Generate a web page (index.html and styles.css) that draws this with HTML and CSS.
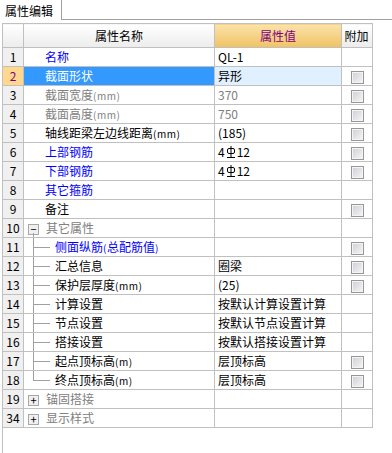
FILE: index.html
```html
<!DOCTYPE html>
<html lang="zh-CN">
<head>
    <meta charset="UTF-8">
    <title>属性编辑</title>
    <link rel="stylesheet" href="styles.css">
</head>
<body>
    <div class="tabbar">
        <div class="tab">属性编辑</div>
        <div class="tab-rest"></div>
    </div>

    <div class="panel">
        <table class="grid">
            <colgroup>
                <col class="c-num">
                <col class="c-name">
                <col class="c-val">
                <col class="c-add">
            </colgroup>
            <thead>
                <tr>
                    <th class="h-num"></th>
                    <th class="h-name">属性名称</th>
                    <th class="h-val">属性值</th>
                    <th class="h-add">附加</th>
                </tr>
            </thead>
            <tbody>
                <tr>
                    <td class="num">1</td>
                    <td class="name blue">名称</td>
                    <td class="val">QL-1</td>
                    <td class="add"></td>
                </tr>
                <tr class="selected">
                    <td class="num">2</td>
                    <td class="name">截面形状</td>
                    <td class="val">异形</td>
                    <td class="add"><span class="cb"></span></td>
                </tr>
                <tr>
                    <td class="num">3</td>
                    <td class="name gray">截面宽度<small>(mm)</small></td>
                    <td class="val gray">370</td>
                    <td class="add"><span class="cb"></span></td>
                </tr>
                <tr>
                    <td class="num">4</td>
                    <td class="name gray">截面高度<small>(mm)</small></td>
                    <td class="val gray">750</td>
                    <td class="add"><span class="cb"></span></td>
                </tr>
                <tr>
                    <td class="num">5</td>
                    <td class="name">轴线距梁左边线距离<small>(mm)</small></td>
                    <td class="val">(185)</td>
                    <td class="add"><span class="cb"></span></td>
                </tr>
                <tr>
                    <td class="num">6</td>
                    <td class="name blue">上部钢筋</td>
                    <td class="val">4<svg class="bar" width="10" height="12" viewBox="0 0 10 12"><rect x="1.5" y="2.5" width="7" height="5" rx="1.5" fill="none" stroke="#000"/><path d="M5 0v11M1 11.5h8" stroke="#000"/></svg>12</td>
                    <td class="add"><span class="cb"></span></td>
                </tr>
                <tr>
                    <td class="num">7</td>
                    <td class="name blue">下部钢筋</td>
                    <td class="val">4<svg class="bar" width="10" height="12" viewBox="0 0 10 12"><rect x="1.5" y="2.5" width="7" height="5" rx="1.5" fill="none" stroke="#000"/><path d="M5 0v11M1 11.5h8" stroke="#000"/></svg>12</td>
                    <td class="add"><span class="cb"></span></td>
                </tr>
                <tr>
                    <td class="num">8</td>
                    <td class="name blue">其它箍筋</td>
                    <td class="val"></td>
                    <td class="add"></td>
                </tr>
                <tr>
                    <td class="num">9</td>
                    <td class="name">备注</td>
                    <td class="val"></td>
                    <td class="add"><span class="cb"></span></td>
                </tr>
                <tr>
                    <td class="num">10</td>
                    <td class="name group open gray"><span class="toggle">−</span>其它属性</td>
                    <td class="val"></td>
                    <td class="add"></td>
                </tr>
                <tr>
                    <td class="num">11</td>
                    <td class="name child blue">侧面纵筋<small>(</small>总配筋值<small>)</small></td>
                    <td class="val"></td>
                    <td class="add"><span class="cb"></span></td>
                </tr>
                <tr>
                    <td class="num">12</td>
                    <td class="name child">汇总信息</td>
                    <td class="val">圈梁</td>
                    <td class="add"><span class="cb"></span></td>
                </tr>
                <tr>
                    <td class="num">13</td>
                    <td class="name child">保护层厚度<small>(mm)</small></td>
                    <td class="val">(25)</td>
                    <td class="add"><span class="cb"></span></td>
                </tr>
                <tr>
                    <td class="num">14</td>
                    <td class="name child">计算设置</td>
                    <td class="val">按默认计算设置计算</td>
                    <td class="add"></td>
                </tr>
                <tr>
                    <td class="num">15</td>
                    <td class="name child">节点设置</td>
                    <td class="val">按默认节点设置计算</td>
                    <td class="add"></td>
                </tr>
                <tr>
                    <td class="num">16</td>
                    <td class="name child">搭接设置</td>
                    <td class="val">按默认搭接设置计算</td>
                    <td class="add"></td>
                </tr>
                <tr>
                    <td class="num">17</td>
                    <td class="name child">起点顶标高<small>(m)</small></td>
                    <td class="val">层顶标高</td>
                    <td class="add"><span class="cb"></span></td>
                </tr>
                <tr>
                    <td class="num">18</td>
                    <td class="name child last">终点顶标高<small>(m)</small></td>
                    <td class="val">层顶标高</td>
                    <td class="add"><span class="cb"></span></td>
                </tr>
                <tr>
                    <td class="num">19</td>
                    <td class="name group gray"><span class="toggle">+</span>锚固搭接</td>
                    <td class="val"></td>
                    <td class="add"></td>
                </tr>
                <tr>
                    <td class="num">34</td>
                    <td class="name group gray"><span class="toggle">+</span>显示样式</td>
                    <td class="val"></td>
                    <td class="add"></td>
                </tr>
            </tbody>
        </table>
    </div>
</body>
</html>
```

FILE: styles.css
```css
* {
    margin: 0;
    padding: 0;
    box-sizing: border-box;
}

body {
    font-family: "Noto Sans CJK SC", "Liberation Sans", sans-serif;
    font-size: 12px;
    color: #000;
    background: #fff;
    overflow: hidden;
}

/* 标签页 */
.tabbar {
    display: flex;
    height: 20px;
}

.tab {
    width: 62px;
    height: 20px;
    padding: 1px 0 0 5px;
    line-height: 19px;
    border-right: 1px solid #a0a0a0;
}

.tab-rest {
    flex: 1;
    border-bottom: 1px solid #a0a0a0;
}

.panel {
    margin: 3px 0 0 2px;
    height: calc(100vh - 23px);
    border-left: 1px solid #c0c0c0;
}

/* 属性表格 */
.grid {
    margin-left: -1px;
    width: 370px;
    table-layout: fixed;
    border-collapse: collapse;
}

.c-num { width: 21px; }
.c-name { width: 191px; }
.c-val { width: 127px; }
.c-add { width: 31px; }

.grid th,
.grid td {
    border: 1px solid #c0c0c0;
    white-space: nowrap;
    overflow: hidden;
    font-weight: normal;
    line-height: 16px;
}

.grid th {
    height: 24px;
    text-align: center;
    background: linear-gradient(#ffffff, #ececec);
}

.grid th.h-val {
    color: #800080;
    background: linear-gradient(#fbe3ab, #f0c263);
}

.grid th.h-add {
    padding-right: 1px;
}

.grid td {
    height: 19px;
    padding: 0;
}

.num {
    text-align: center;
    background: #f0f0f0;
}

.name {
    padding-left: 21px !important;
    position: relative;
}

.val {
    padding-left: 3px !important;
}

.add {
    text-align: center;
}

small {
    font-size: 10px;
    letter-spacing: 0.5px;
}

.blue { color: #0000ff; }
.gray { color: #808080; }

.selected .num {
    color: #800080;
    background: #ffd88e;
}

.selected .name {
    color: #fff;
    background: #3399ff;
}

.selected .val {
    background: #e0f0ff;
}

.bar {
    vertical-align: -1px;
    margin: 0 1px;
}

/* 复选框 */
.cb {
    display: inline-block;
    width: 13px;
    height: 13px;
    vertical-align: middle;
    border: 1px solid #979797;
    box-shadow: inset 0 0 0 1px #f4f4f4;
    background: linear-gradient(135deg, #cfcfd4, #f6f6f8);
}

/* 树形分组 */
.group {
    padding-left: 4px !important;
}

.toggle {
    display: inline-block;
    width: 11px;
    height: 11px;
    margin-right: 7px;
    border: 1px solid #a8a8a8;
    background: #f0f0f0;
    color: #000;
    font-size: 11px;
    line-height: 8px;
    text-align: center;
    vertical-align: -1px;
}

.group.open::after {
    content: "";
    position: absolute;
    left: 9px;
    top: 14px;
    bottom: 0;
    border-left: 1px solid #a0a0a0;
}

.child {
    padding-left: 31px !important;
}

.child::before {
    content: "";
    position: absolute;
    left: 9px;
    top: 0;
    bottom: 0;
    border-left: 1px solid #a0a0a0;
}

.child.last::before {
    bottom: 50%;
}

.child::after {
    content: "";
    position: absolute;
    left: 9px;
    top: 50%;
    width: 17px;
    border-top: 1px solid #a0a0a0;
}
```
